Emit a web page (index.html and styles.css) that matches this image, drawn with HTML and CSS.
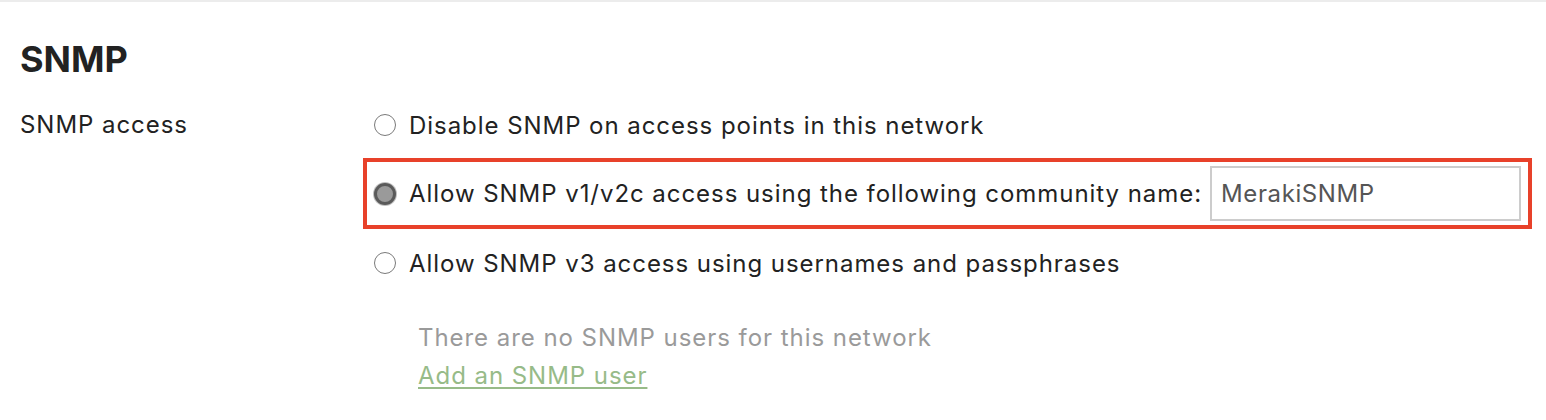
FILE: index.html
```html
<!DOCTYPE html>
<html>
<head>
<meta charset="utf-8">
<link rel="stylesheet" href="styles.css">
</head>
<body>
<div class="page">
  <h1 class="title">SNMP</h1>
  <div class="row">
    <div class="label">SNMP access</div>
    <div class="options">
      <div class="option">
        <span class="radio"></span>
        <span class="opt-text">Disable SNMP on access points in this network</span>
      </div>
      <div class="option highlighted">
        <span class="radio checked"></span>
        <span class="opt-text">Allow SNMP v1/v2c access using the following community name:</span>
        <span class="input">MerakiSNMP</span>
      </div>
      <div class="option">
        <span class="radio"></span>
        <span class="opt-text">Allow SNMP v3 access using usernames and passphrases</span>
      </div>
      <div class="users">
        <div class="muted">There are no SNMP users for this network</div>
        <a class="link" href="#">Add an SNMP user</a>
      </div>
    </div>
  </div>
</div>
</body>
</html>
```
FILE: styles.css
```css
html, body {
  margin: 0;
  padding: 0;
  background: #ffffff;
}
body {
  font-family: "Inter", "Noto Sans", sans-serif;
  color: #222222;
  width: 1546px;
  height: 420px;
  overflow: hidden;
  letter-spacing: 0.95px;
}
.page {
  border-top: 2px solid #ececec;
  padding: 0 0 0 20px;
}
.title {
  margin: 0;
  padding-top: 37px;
  font-size: 36px;
  font-weight: 700;
  line-height: 40px;
  letter-spacing: 0;
  color: #222;
}
.row {
  display: flex;
  margin-top: 23px;
}
.label {
  width: 343px;
  font-size: 24px;
  line-height: 30px;
  padding-top: 8px;
}
.options {
  display: flex;
  flex-direction: column;
}
.option {
  display: flex;
  align-items: center;
  height: 38px;
  font-size: 24px;
  padding-left: 7px;
  border: 4px solid transparent;
}
.option.highlighted {
  border-color: #e8412a;
  box-sizing: border-box;
  height: 71px;
  width: 1169px;
  margin-top: 10px;
}
.option.highlighted + .option {
  margin-top: 11px;
}
.radio {
  width: 22px;
  height: 22px;
  border-radius: 50%;
  border: 1.5px solid #7a7a7a;
  box-sizing: border-box;
  background: #fff;
  margin-right: 13px;
  flex: none;
}
.radio.checked {
  border: 3px solid #5a5a5a;
  background: #9a9a9a;
  box-shadow: 0 0 0 1px #c0c0c0;
}
.opt-text {
  white-space: nowrap;
}
.input {
  box-sizing: border-box;
  margin-left: 8px;
  width: 311px;
  height: 55px;
  border: 2px solid #cccccc;
  display: flex;
  align-items: center;
  padding-left: 9px;
  color: #555;
  font-size: 24px;
  letter-spacing: 0.6px;
}
.users {
  padding-left: 55px;
  margin-top: 33px;
  font-size: 24px;
  line-height: 38px;
}
.muted {
  color: #9a9a9a;
}
.link {
  color: #97bb88;
  text-decoration: underline;
  text-underline-offset: 3px;
}
```
